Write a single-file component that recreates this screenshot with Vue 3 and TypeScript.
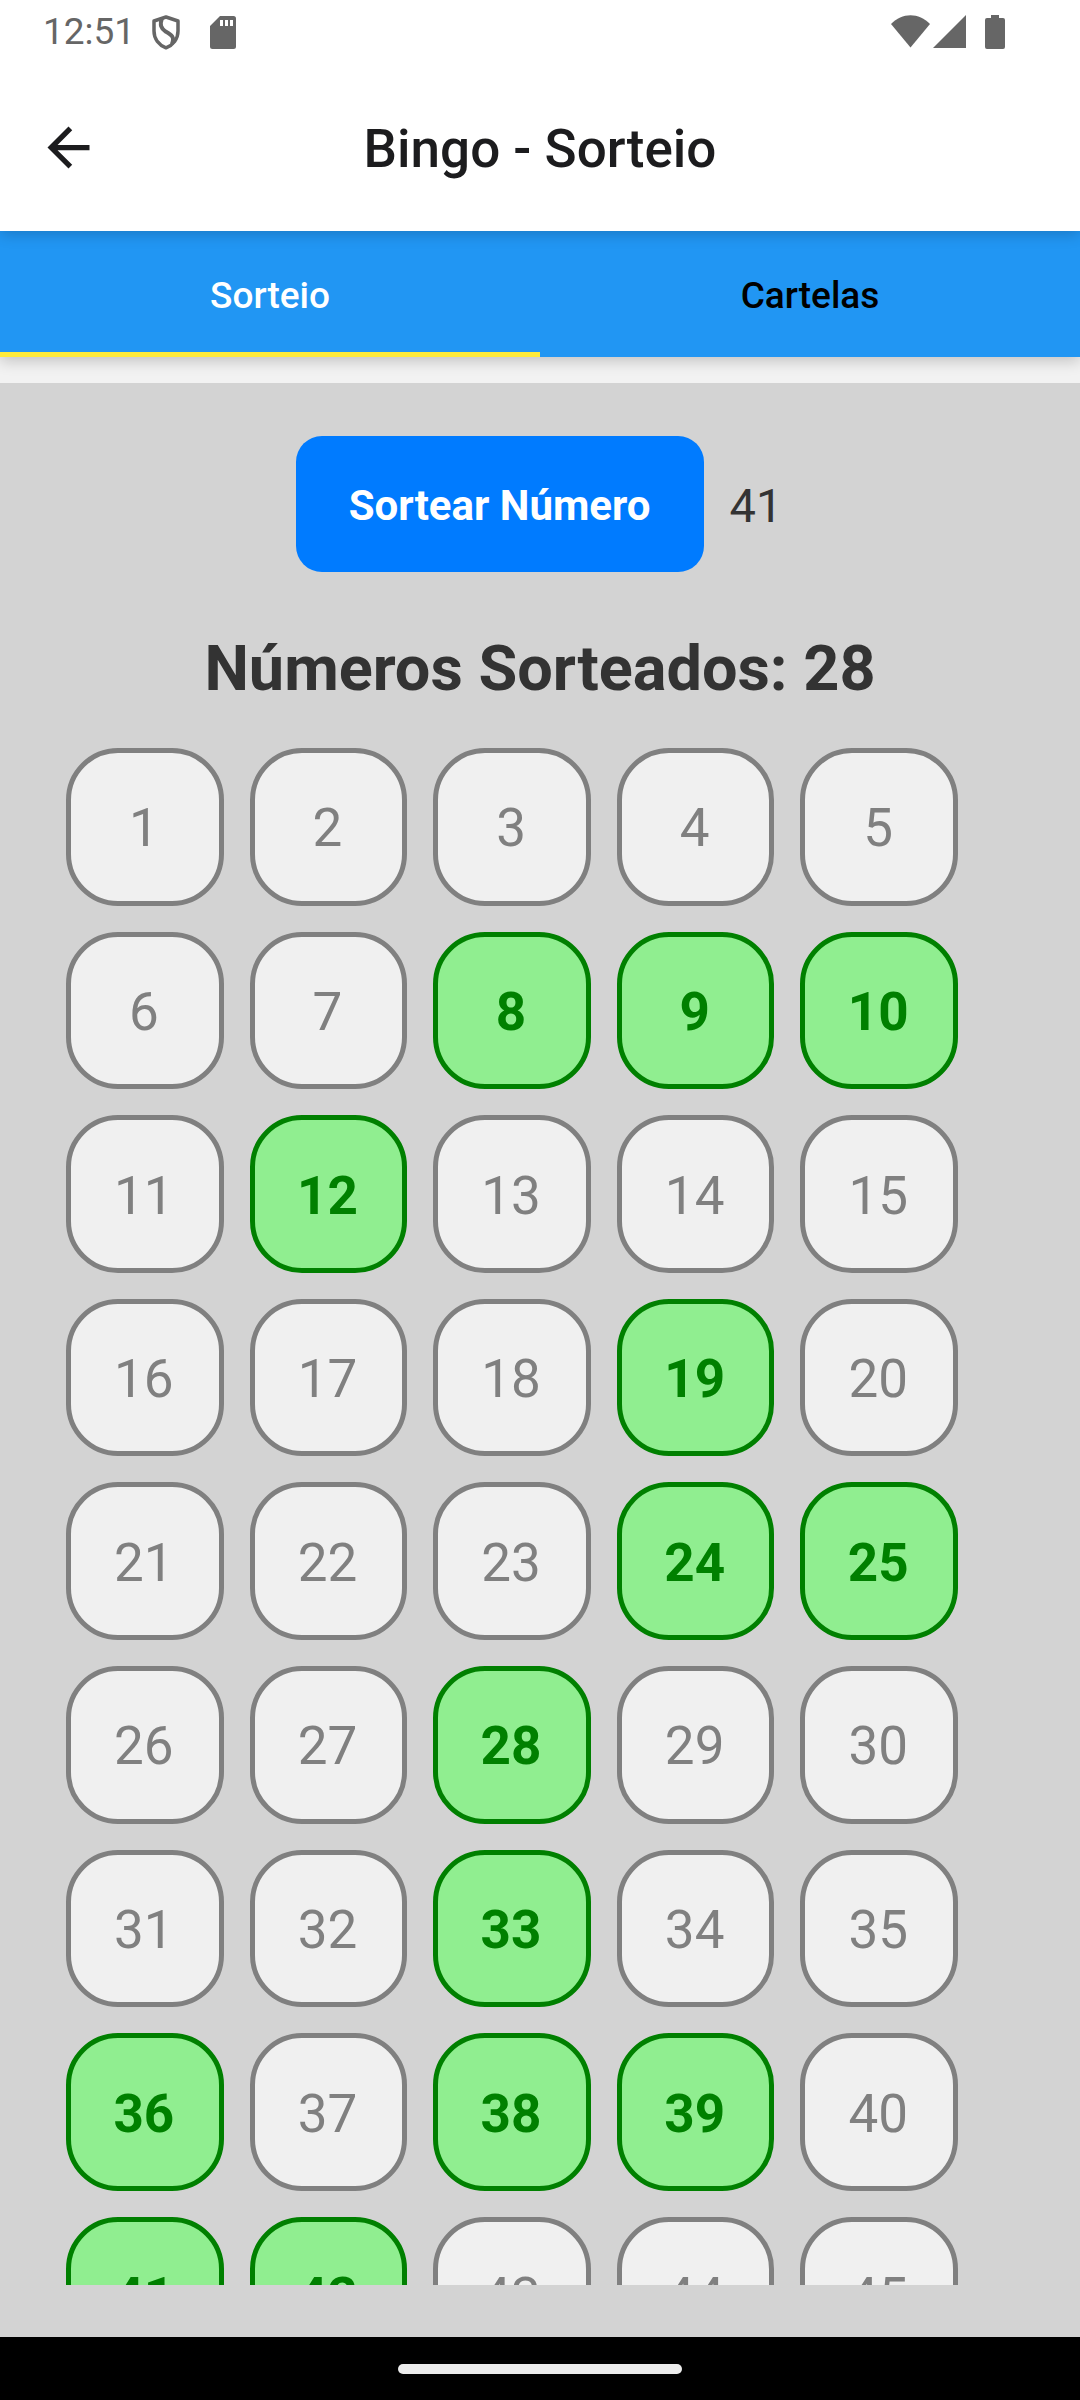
<script setup lang="ts">
import { ref } from 'vue'

type TabId = 'sorteio' | 'cartelas'

const tabs: { id: TabId; label: string }[] = [
  { id: 'sorteio', label: 'Sorteio' },
  { id: 'cartelas', label: 'Cartelas' },
]
const activeTab = ref<TabId>('sorteio')

const numbers = Array.from({ length: 45 }, (_, i) => i + 1)
const drawn = new Set<number>([8, 9, 10, 12, 19, 24, 25, 28, 33, 36, 38, 39, 41, 42])
const drawnCount = 28
const lastNumber = 41
</script>

<template>
  <div class="screen">
    <div class="status-bar">
      <span class="clock">12:51</span>
      <svg class="shield" width="30" height="36" viewBox="0 0 30 36" fill="none" stroke="currentColor" aria-hidden="true">
        <path d="M15 3 L27 7 V17 C27 25 22 31 15 33.800 C8 31 3 25 3 17 V7 Z" stroke-width="3.500" stroke-linejoin="round" />
        <path d="M11 4 C8.500 11 10 14 14.500 17.500 C20.500 21 24 23 21 30" stroke-width="4" />
      </svg>
      <svg class="sd-card" width="26" height="36" viewBox="0 0 26 36" fill="currentColor" aria-hidden="true">
        <path fill-rule="evenodd" d="M10 2H23.500A2.500 2.500 0 0 1 26 4.500V32.500A2.500 2.500 0 0 1 23.500 35H2.500A2.500 2.500 0 0 1 0 32.500V12ZM10 6V12H13V6ZM15 6V12H18V6ZM20 6V12H23V6Z" />
      </svg>
      <span class="spacer"></span>
      <svg width="40" height="36" viewBox="0 0 40 36" fill="currentColor" aria-hidden="true">
        <path d="M1 10C12-1.700 29-1.700 40 10L20.500 33.500Z" />
      </svg>
      <svg class="signal" width="33" height="36" viewBox="0 0 33 36" fill="currentColor" aria-hidden="true">
        <path d="M33 1V34H0Z" />
      </svg>
      <svg class="battery" width="20" height="36" viewBox="0 0 20 36" fill="currentColor" aria-hidden="true">
        <path d="M6 1H14V4H18A2 2 0 0 1 20 6V33A2 2 0 0 1 18 35H2A2 2 0 0 1 0 33V6A2 2 0 0 1 2 4H6Z" />
      </svg>
    </div>

    <header class="app-bar">
      <button class="back" type="button" aria-label="Voltar">
        <svg width="63" height="63" viewBox="0 0 24 24" fill="currentColor" aria-hidden="true">
          <path d="M20 11H7.830l5.590-5.590L12 4l-8 8 8 8 1.410-1.410L7.830 13H20z" />
        </svg>
      </button>
      <h1>Bingo - Sorteio</h1>
    </header>

    <nav class="tabs" role="tablist">
      <button
        v-for="tab in tabs"
        :key="tab.id"
        type="button"
        role="tab"
        :class="['tab', { active: tab.id === activeTab }]"
        :aria-selected="tab.id === activeTab"
        @click="activeTab = tab.id"
      >
        {{ tab.label }}
      </button>
    </nav>

    <main class="content">
      <div class="draw-row">
        <button class="draw" type="button">Sortear Número</button>
        <output class="last">{{ lastNumber }}</output>
      </div>
      <h2>Números Sorteados: {{ drawnCount }}</h2>
      <div class="list">
        <ul class="grid">
          <li v-for="n in numbers" :key="n" :class="['ball', { hit: drawn.has(n) }]">{{ n }}</li>
        </ul>
      </div>
    </main>

    <div class="nav-bar"><span class="pill"></span></div>
  </div>
</template>

<style>
body {
  margin: 0;
}
</style>

<style scoped>
.screen {
  box-sizing: border-box;
  display: flex;
  flex-direction: column;
  height: 100vh;
  background: #f2f2f2;
  font-family: Roboto, sans-serif;
  overflow: hidden;
}

button {
  border: 0;
  padding: 0;
  background: none;
  font-family: inherit;
  cursor: pointer;
}

svg {
  display: block;
  flex: none;
}

.status-bar {
  position: relative;
  z-index: 3;
  flex: none;
  display: flex;
  align-items: center;
  height: 63px;
  padding: 0 75px 0 43px;
  background: #fff;
  color: #666;
}

.clock {
  font-size: 37px;
  line-height: 63px;
}

.shield {
  margin-left: 16px;
}

.sd-card {
  margin-left: 29px;
}

.spacer {
  flex: 1;
}

.signal {
  margin-left: 3px;
}

.battery {
  margin-left: 19px;
}

.app-bar {
  position: relative;
  z-index: 2;
  flex: none;
  display: grid;
  grid-template-columns: 63px 1fr 63px;
  align-items: center;
  height: 168px;
  padding: 0 37px;
  background: #fff;
  color: #1c1c1e;
  box-shadow: 0 3px 14px rgba(0, 0, 0, 0.2);
}

.back {
  color: inherit;
}

h1 {
  margin: 0;
  padding-top: 3px;
  font-size: 53px;
  font-weight: 500;
  line-height: 62px;
  text-align: center;
}

.tabs {
  position: relative;
  z-index: 1;
  flex: none;
  display: flex;
  height: 126px;
  background: #2196f3;
  box-shadow: 0 4px 14px rgba(0, 0, 0, 0.2);
}

.tab {
  flex: 1;
  padding-top: 2px;
  border-top: 5px solid transparent;
  border-bottom: 5px solid transparent;
  color: #000;
  font-size: 37px;
  font-weight: 500;
}

.tab.active {
  border-bottom-color: #ffeb3b;
  color: #fff;
}

.content {
  flex: 1;
  min-height: 0;
  display: flex;
  flex-direction: column;
  margin-top: 26px;
  padding: 53px 52px 52px;
  background: #d3d3d3;
  color: #333;
}

.draw-row {
  flex: none;
  display: flex;
  justify-content: center;
  align-items: center;
  gap: 26px;
}

.draw {
  height: 136px;
  padding: 2px 53px 0;
  border-radius: 26px;
  background: #007bff;
  color: #fff;
  font-size: 42px;
  font-weight: 700;
}

.last {
  padding: 3px 2px 0 0;
  font-size: 47px;
}

h2 {
  flex: none;
  margin: 60px 0 34px;
  font-size: 63px;
  font-weight: 700;
  line-height: 74px;
  text-align: center;
}

.list {
  flex: 1;
  min-height: 0;
  overflow-y: auto;
  scrollbar-width: none;
}

.grid {
  display: grid;
  grid-template-columns: repeat(5, 1fr);
  gap: 26px;
  margin: 0;
  padding: 8px 70px 26px 14px;
  list-style: none;
}

.ball {
  box-sizing: border-box;
  display: flex;
  align-items: center;
  justify-content: center;
  aspect-ratio: 1;
  padding: 3px 2px 0 0;
  border: 5px solid #808080;
  border-radius: 52px;
  background: #f0f0f0;
  color: #808080;
  font-size: 53px;
}

.ball.hit {
  border-color: #008000;
  background: #90ee90;
  color: #008000;
  font-weight: 700;
}

.nav-bar {
  flex: none;
  display: flex;
  align-items: center;
  justify-content: center;
  height: 63px;
  background: #000;
}

.pill {
  width: 284px;
  height: 10px;
  border-radius: 5px;
  background: #ececec;
}
</style>
